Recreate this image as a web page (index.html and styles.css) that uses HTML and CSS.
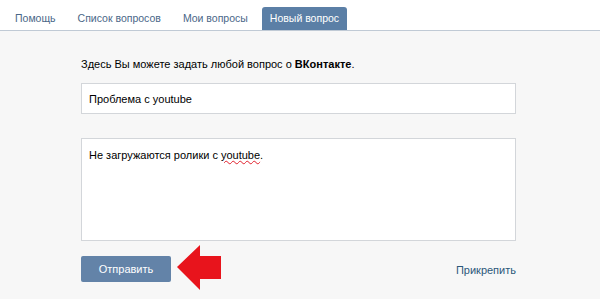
FILE: index.html
```html
<!DOCTYPE html>
<html lang="ru">
<head>
    <meta charset="UTF-8">
    <title>Новый вопрос</title>
    <link rel="stylesheet" href="styles.css">
</head>
<body>

<div class="tabs">
    <a href="#" class="tab">Помощь</a>
    <a href="#" class="tab">Список вопросов</a>
    <a href="#" class="tab">Мои вопросы</a>
    <a href="#" class="tab active">Новый вопрос</a>
</div>

<div class="content">
    <p class="intro">Здесь Вы можете задать любой вопрос о <b>ВКонтакте</b>.</p>

    <div class="field title-field">Проблема с youtube</div>

    <div class="field text-field">Не загружаются ролики с <span class="typo">youtube</span>.</div>

    <div class="actions">
        <button class="send-button">Отправить</button>
        <svg class="arrow" width="46" height="46" viewBox="0 0 46 46">
            <polygon points="1,22 24,0 24,11 45,11 45,34 24,34 24,45" fill="#e8141c"/>
        </svg>
        <a href="#" class="attach">Прикрепить</a>
    </div>
</div>

</body>
</html>
```

FILE: styles.css
```css
body {
    margin: 0;
    padding: 0;
    font-family: "Liberation Sans", Tahoma, sans-serif;
    font-size: 11px;
    color: #000;
    background-color: #f7f7f7;
}

.tabs {
    display: flex;
    align-items: flex-end;
    height: 30px;
    padding-left: 7px;
    background-color: #fff;
    border-bottom: 1px solid #c0cad5;
}

.tab {
    display: block;
    padding: 0 8px;
    margin-right: 6px;
    height: 23px;
    line-height: 23px;
    font-size: 10.5px;
    color: #4a6788;
    text-decoration: none;
    border-radius: 3px 3px 0 0;
}

.tab.active {
    background-color: #5b7fa6;
    color: #fff;
}

.content {
    padding: 14px 84px 0 81px;
}

.intro {
    margin: 12px 0 12px;
    line-height: 14px;
}

.field {
    background-color: #fff;
    border: 1px solid #d3d6da;
    padding: 0 7px;
    box-sizing: border-box;
}

.title-field {
    height: 31px;
    line-height: 30px;
}

.text-field {
    margin-top: 24px;
    height: 103px;
    padding-top: 9px;
    line-height: 14px;
}

.typo {
    text-decoration: underline wavy #e0202c;
    text-decoration-thickness: 1px;
}

.actions {
    display: flex;
    align-items: center;
    margin-top: 4px;
    height: 46px;
}

.send-button {
    width: 90px;
    height: 26px;
    margin-top: 2px;
    border: none;
    border-radius: 2px;
    background-color: #6383a8;
    color: #fff;
    font-family: inherit;
    font-size: 11px;
}

.arrow {
    margin-left: 5px;
}

.attach {
    margin-left: auto;
    margin-top: 4px;
    color: #2b587a;
    text-decoration: none;
}
```
